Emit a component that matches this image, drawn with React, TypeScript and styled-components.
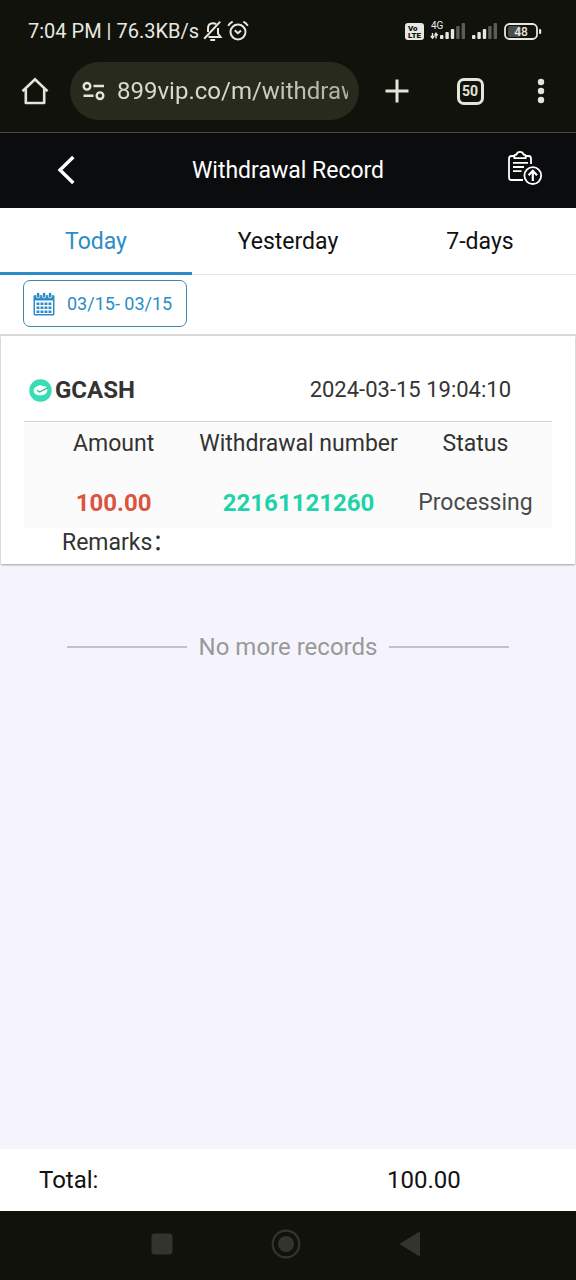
import React, { useState } from "react";
import styled, { createGlobalStyle } from "styled-components";

const GlobalStyle = createGlobalStyle`
  *, *::before, *::after { box-sizing: border-box; }
  body { margin: 0; background: #f5f4fd; }
  body, button, input, table { font-family: Roboto, "Noto Sans CJK SC", sans-serif; }
  svg { display: block; flex: none; }
`;

const INK = "#11120b";
const BLUE = "#2c8cc8";

const Screen = styled.div`
  display: flex;
  flex-direction: column;
  min-height: 100vh;
`;

const IconButton = styled.button<{ $width?: number; $indent?: number }>`
  display: flex;
  align-items: center;
  justify-content: center;
  flex: none;
  width: ${(p) => p.$width ?? 72}px;
  height: 100%;
  padding: 0 0 0 ${(p) => p.$indent ?? 0}px;
  border: 0;
  background: none;
  color: inherit;
  cursor: pointer;
`;

/* ---------- device status bar ---------- */

const StatusBar = styled.div`
  display: flex;
  align-items: center;
  justify-content: space-between;
  height: 62px;
  padding: 0 34px 0 28px;
  background: ${INK};
  color: #e8e8e2;
`;

const StatusGroup = styled.div<{ $gap: number }>`
  display: flex;
  align-items: center;
  gap: ${(p) => p.$gap}px;
`;

const StatusText = styled.span`
  font-size: 20px;
  line-height: 24px;
  white-space: nowrap;
`;

/* ---------- browser toolbar ---------- */

const BrowserBar = styled.div`
  display: flex;
  align-items: flex-start;
  height: 71px;
  border-bottom: 1px solid #4a4a45;
  background: ${INK};
  color: #e3e5d9;
`;

const BarSlot = styled.div`
  display: flex;
  height: 58px;
`;

const AddressPill = styled.label`
  display: flex;
  align-items: center;
  flex: 1;
  min-width: 0;
  height: 58px;
  gap: 12px;
  margin-right: 1px;
  padding: 0 11px 0 12px;
  border-radius: 29px;
  background: #272a1c;
`;

const AddressInput = styled.input`
  flex: 1;
  min-width: 0;
  width: 100%;
  padding: 0;
  border: 0;
  outline: 0;
  background: none;
  color: #d8dbca;
  font-size: 24px;
  line-height: 30px;
  mask-image: linear-gradient(to right, #000 50%, rgba(0, 0, 0, 0.75));
`;

const TabCount = styled.span`
  display: grid;
  place-items: center;
  width: 27px;
  height: 27px;
  border: 3px solid currentColor;
  border-radius: 7px;
  font-size: 14px;
  line-height: 16px;
  font-weight: 700;
`;

/* ---------- page header, tabs, filter ---------- */

const PageHeader = styled.header`
  display: flex;
  align-items: center;
  height: 75px;
  background: #0b0c0e;
  color: #fff;
`;

const PageTitle = styled.h1`
  flex: 1;
  margin: 0;
  font-size: 23px;
  line-height: 28px;
  font-weight: 400;
  text-align: center;
  white-space: nowrap;
`;

const Tabs = styled.div`
  display: flex;
  height: 67px;
  background: #fff;
`;

const Tab = styled.button<{ $active: boolean }>`
  flex: 1;
  padding: 0;
  border: 0;
  background: none;
  box-shadow: inset 0 ${(p) => (p.$active ? `-3px ${BLUE}` : "-1px #e4e4e4")};
  color: ${(p) => (p.$active ? BLUE : "#111")};
  font-size: 23px;
  line-height: 28px;
  cursor: pointer;
`;

const FilterRow = styled.div`
  padding: 5px 23px 7px;
  border-bottom: 2px solid #dcdcdc;
  background: #fff;
`;

const DateButton = styled.button`
  display: flex;
  align-items: center;
  gap: 12px;
  height: 47px;
  padding: 0 14px 0 9px;
  border: 1px solid #3f88ab;
  border-radius: 7px;
  background: #fff;
  color: ${BLUE};
  font-size: 18px;
  line-height: 24px;
  white-space: nowrap;
  cursor: pointer;
`;

/* ---------- records ---------- */

const Records = styled.main`
  flex: 1;
  background: #f5f4fd;
`;

const Card = styled.article`
  margin: 0 1px;
  padding: 1px 23px 0;
  background: #fff;
  box-shadow: 0 1px 2px rgba(0, 0, 0, 0.35);
  color: #333;
  font-size: 23px;
  line-height: 28px;
`;

const CardHead = styled.div`
  display: flex;
  align-items: center;
  justify-content: space-between;
  height: 85px;
  padding: 22px 41px 0 5px;
  border-bottom: 1px solid #d4d4d4;
`;

const Method = styled.h2`
  display: flex;
  align-items: center;
  gap: 3px;
  margin: 0;
  font-size: 24px;
  line-height: 28px;
  font-weight: 700;
`;

const Timestamp = styled.time`
  font-size: 22px;
`;

const RecordTable = styled.table`
  width: 100%;
  border-collapse: collapse;
  table-layout: fixed;
  background: #fbfbfb;

  th:first-child,
  td:first-child {
    padding-left: 5px;
  }
`;

const Column = styled.col<{ $share: number }>`
  width: ${(p) => p.$share}%;
`;

const HeadCell = styled.th`
  height: 42px;
  padding: 2px 0 0;
  font-weight: 400;
  white-space: nowrap;
`;

const Cell = styled.td<{ $color: string; $bold?: boolean }>`
  height: 64px;
  padding: 14px 0 0;
  color: ${(p) => p.$color};
  font-size: ${(p) => (p.$bold ? 24 : 23)}px;
  font-weight: ${(p) => (p.$bold ? 700 : 400)};
  text-align: center;
`;

const Remarks = styled.p`
  height: 36px;
  margin: 0;
  padding: 1px 0 0 38px;
`;

const EndNote = styled.div`
  display: flex;
  align-items: center;
  gap: 12px;
  padding: 68px 67px;
  color: #999;
  font-size: 24px;
  line-height: 30px;
  white-space: nowrap;

  &::before,
  &::after {
    content: "";
    flex: 1;
    border-top: 2px solid #c2c2c6;
  }
`;

/* ---------- footer and navigation ---------- */

const TotalBar = styled.footer`
  display: flex;
  align-items: center;
  justify-content: space-between;
  height: 62px;
  padding: 0 20% 0 39px;
  background: #fff;
  color: #111;
  font-size: 24px;
  line-height: 28px;
`;

const SystemNav = styled.nav`
  display: flex;
  justify-content: center;
  height: 69px;
  padding: 0 4px 4px 0;
  background: ${INK};
  color: #33342f;
`;

/* ---------- icons ---------- */

const MutedBell = () => (
  <svg width="20" height="22" viewBox="0 0 20 22" fill="none" stroke="currentColor" strokeWidth="2">
    <path d="M5 12V8.500C5 5.200 7 3.200 10 3.200c1.300 0 2.300.4 3.200 1.100M15 8v5.600l2.500 3.400H5.500" />
    <path d="M1.200 18.800L17.200 1.600" />
    <path d="M7.300 20h4.800" />
  </svg>
);

const AlarmClock = () => (
  <svg width="22" height="22" viewBox="0 0 22 22" fill="none" stroke="currentColor" strokeWidth="2">
    <circle cx="11" cy="12" r="7.500" />
    <path d="M7.800 10.300L10.800 13.200L14 10.600" />
    <path d="M1.200 5.700C2.300 3.900 3.800 2.500 5.700 1.700M20.800 5.700C19.700 3.900 18.200 2.500 16.300 1.700" />
  </svg>
);

const VoLte = () => (
  <svg width="19" height="17" viewBox="0 0 19 17">
    <rect width="19" height="17" rx="3" fill="currentColor" />
    <g fill={INK} fontFamily="Roboto, sans-serif" fontWeight="900" fontSize="8">
      <text x="3" y="8">Vo</text>
      <text x="3" y="15">LTE</text>
    </g>
  </svg>
);

const bars = [4, 7, 10, 13, 16];

const SignalBars = ({ x = 0, y = 0 }: { x?: number; y?: number }) => (
  <g>
    {bars.map((h, i) => (
      <rect
        key={h}
        x={x + i * 5.4}
        y={y + 16 - h}
        width="3.4"
        height={h}
        rx="1"
        fill={i < 3 ? "currentColor" : "#5c5d57"}
      />
    ))}
  </g>
);

const MobileSignal = () => (
  <svg width="36" height="22" viewBox="0 0 36 22">
    <text x="1" y="9" fill="currentColor" fontFamily="Roboto, sans-serif" fontSize="10">4G</text>
    <path
      d="M2.500 13v5M0.800 16l1.700 2.200L4.200 16M6 18.500v-5M4.600 15.500L6 13.300l1.700 2.200"
      fill="none"
      stroke="currentColor"
      strokeWidth="1.4"
    />
    <SignalBars x={10} y={3} />
  </svg>
);

const PlainSignal = () => (
  <svg width="26" height="22" viewBox="0 0 26 22">
    <SignalBars x={0} y={3} />
  </svg>
);

const Battery = () => (
  <svg width="38" height="17" viewBox="0 0 38 17">
    <rect x="4" y="3" width="13" height="11" rx="2" fill="#4b4c46" />
    <rect x="1" y="1" width="32" height="15" rx="4.5" fill="none" stroke="currentColor" strokeWidth="1.8" />
    <rect x="35" y="6" width="2.2" height="5" rx="1" fill="currentColor" />
    <text
      x="17"
      y="13"
      textAnchor="middle"
      fill="currentColor"
      fontFamily="Roboto, sans-serif"
      fontSize="12"
      fontWeight="500"
    >
      48
    </text>
  </svg>
);

const HomeIcon = () => (
  <svg width="28" height="28" viewBox="0 0 28 28" fill="none" stroke="currentColor" strokeWidth="2.6" strokeLinejoin="round">
    <path d="M1.500 14.200L14 2.300l12.500 11.900" strokeLinejoin="miter" />
    <path d="M4.800 12v14h18.400V12" />
  </svg>
);

const SiteSettings = () => (
  <svg width="23" height="20" viewBox="0 0 23 20" fill="none" stroke="currentColor" strokeWidth="2.4">
    <circle cx="5" cy="5.3" r="3.3" />
    <path d="M11.500 5H22M1.500 14.800h10" />
    <circle cx="18" cy="14.7" r="3.3" />
  </svg>
);

const PlusIcon = () => (
  <svg width="24" height="24" viewBox="0 0 24 24" stroke="currentColor" strokeWidth="3">
    <path d="M12 0.500v23M0.500 12h23" />
  </svg>
);

const DotsIcon = () => (
  <svg width="8" height="26" viewBox="0 0 8 26" fill="currentColor">
    <circle cx="4" cy="4" r="3.2" />
    <circle cx="4" cy="13" r="3.2" />
    <circle cx="4" cy="22" r="3.2" />
  </svg>
);

const BackIcon = () => (
  <svg width="18" height="32" viewBox="0 0 18 32" fill="none" stroke="currentColor" strokeWidth="3.4">
    <path d="M16.300 2L3 15l13.300 13" />
  </svg>
);

const ReportIcon = () => (
  <svg width="36" height="42" viewBox="0 0 36 42" fill="none" stroke="currentColor" strokeWidth="1.8" strokeLinejoin="round">
    <path d="M7.500 6H4.500Q2 6 2 8.500v19Q2 30 4.500 30H16M18.500 6h3q2.500 0 2.500 2.500V14" />
    <path d="M7.300 8.200V6.600Q7.300 4.600 9.500 4.500Q10.300 1.900 13 1.900T16.500 4.500Q18.700 4.600 18.700 6.600V8.200Z" />
    <path d="M6 12.800h15M6 17h11M6 21.200h8.500" />
    <circle cx="25.8" cy="25.6" r="8.4" />
    <path d="M25.800 31V21.500M21.600 25.200l4.200-4.400l4.200 4.400" strokeWidth="2.2" strokeLinejoin="miter" />
  </svg>
);

const ringX = [3.4, 9.4, 15.4];
const dotRows = [10.5, 14.5, 18.5];
const dotColumns = [3.5, 7.5, 11.5, 15.5];

const CalendarIcon = () => (
  <svg width="22" height="24" viewBox="0 0 22 24" fill="currentColor">
    <path
      fillRule="evenodd"
      d="M2 3h18q1.500 0 1.500 1.500V22q0 1.500-1.500 1.500H2Q0.500 23.500 0.500 22V4.500Q0.500 3 2 3ZM2 8.500v13.500h18V8.500Z"
    />
    {ringX.map((x) => (
      <rect key={x} x={x} y="0.4" width="3.4" height="5.4" rx="1.5" stroke="#fff" strokeWidth="0.8" />
    ))}
    {dotRows.map((y) =>
      dotColumns.map((x) => <rect key={`${x}-${y}`} x={x} y={y} width="2.9" height="2.5" />)
    )}
  </svg>
);

const GcashIcon = () => (
  <svg width="23" height="23" viewBox="0 0 23 23">
    <circle cx="11.5" cy="11.5" r="11.2" fill="#38ddb4" />
    <path d="M4.600 11.800C4.600 9 6.300 7.600 8.300 7.500C9.500 5.900 12.500 5.700 14 7.200C16.500 6.500 18.600 8.300 18.300 11.300C18 14.600 15.500 16.300 11.500 16.300C7.500 16.300 4.800 15 4.600 11.800Z" fill="#fff" />
    <path d="M8 11.200l2.600 1.800l8-4.200" fill="none" stroke="#1fbf98" strokeWidth="1.3" />
  </svg>
);

const RecentIcon = () => (
  <svg width="22" height="22" viewBox="0 0 22 22">
    <rect x="0.5" y="0.5" width="21" height="21" rx="3" fill="currentColor" />
  </svg>
);

const CircleIcon = () => (
  <svg width="30" height="30" viewBox="0 0 30 30">
    <circle cx="15" cy="15" r="13.3" fill="none" stroke="currentColor" strokeWidth="2.2" />
    <circle cx="15" cy="15" r="8" fill="currentColor" />
  </svg>
);

const TriangleIcon = () => (
  <svg width="22" height="26" viewBox="0 0 22 26">
    <path d="M20 2v22L2 13Z" fill="currentColor" stroke="currentColor" strokeWidth="2" strokeLinejoin="round" />
  </svg>
);

const periods = ["Today", "Yesterday", "7-days"];

export default function App() {
  const [period, setPeriod] = useState("Today");
  const [address, setAddress] = useState("899vip.co/m/withdraw");

  return (
    <Screen>
      <GlobalStyle />
      <StatusBar>
        <StatusGroup $gap={4}>
          <StatusText>7:04 PM | 76.3KB/s</StatusText>
          <MutedBell />
          <AlarmClock />
        </StatusGroup>
        <StatusGroup $gap={6}>
          <VoLte />
          <MobileSignal />
          <PlainSignal />
          <Battery />
        </StatusGroup>
      </StatusBar>

      <BrowserBar>
        <BarSlot>
          <IconButton $width={70} aria-label="Home"><HomeIcon /></IconButton>
        </BarSlot>
        <AddressPill>
          <SiteSettings />
          <AddressInput aria-label="Address" value={address} onChange={(e) => setAddress(e.target.value)} />
        </AddressPill>
        <BarSlot>
          <IconButton $width={74} aria-label="New tab"><PlusIcon /></IconButton>
          <IconButton $width={72} aria-label="Open tabs"><TabCount>50</TabCount></IconButton>
          <IconButton $width={70} aria-label="Menu"><DotsIcon /></IconButton>
        </BarSlot>
      </BrowserBar>

      <PageHeader>
        <IconButton $width={132} aria-label="Back"><BackIcon /></IconButton>
        <PageTitle>Withdrawal Record</PageTitle>
        <IconButton $width={132} $indent={30} aria-label="Report"><ReportIcon /></IconButton>
      </PageHeader>

      <Tabs role="tablist">
        {periods.map((name) => (
          <Tab
            key={name}
            role="tab"
            aria-selected={period === name}
            $active={period === name}
            onClick={() => setPeriod(name)}
          >
            {name}
          </Tab>
        ))}
      </Tabs>

      <FilterRow>
        <DateButton>
          <CalendarIcon />
          03/15- 03/15
        </DateButton>
      </FilterRow>

      <Records>
        <Card>
          <CardHead>
            <Method><GcashIcon />GCASH</Method>
            <Timestamp dateTime="2024-03-15T19:04:10">2024-03-15 19:04:10</Timestamp>
          </CardHead>
          <RecordTable>
            <colgroup>
              <Column $share={33} />
              <Column $share={38} />
              <Column $share={29} />
            </colgroup>
            <thead>
              <tr>
                <HeadCell>Amount</HeadCell>
                <HeadCell>Withdrawal number</HeadCell>
                <HeadCell>Status</HeadCell>
              </tr>
            </thead>
            <tbody>
              <tr>
                <Cell $color="#dc5340" $bold>100.00</Cell>
                <Cell $color="#1fd2aa" $bold>22161121260</Cell>
                <Cell $color="#4a4a4a">Processing</Cell>
              </tr>
            </tbody>
          </RecordTable>
          <Remarks>Remarks：</Remarks>
        </Card>
        <EndNote>No more records</EndNote>
      </Records>

      <TotalBar>
        <span>Total:</span>
        <span>100.00</span>
      </TotalBar>

      <SystemNav>
        <IconButton $width={124} aria-label="Recent apps"><RecentIcon /></IconButton>
        <IconButton $width={124} aria-label="Home screen"><CircleIcon /></IconButton>
        <IconButton $width={124} aria-label="Go back"><TriangleIcon /></IconButton>
      </SystemNav>
    </Screen>
  );
}
